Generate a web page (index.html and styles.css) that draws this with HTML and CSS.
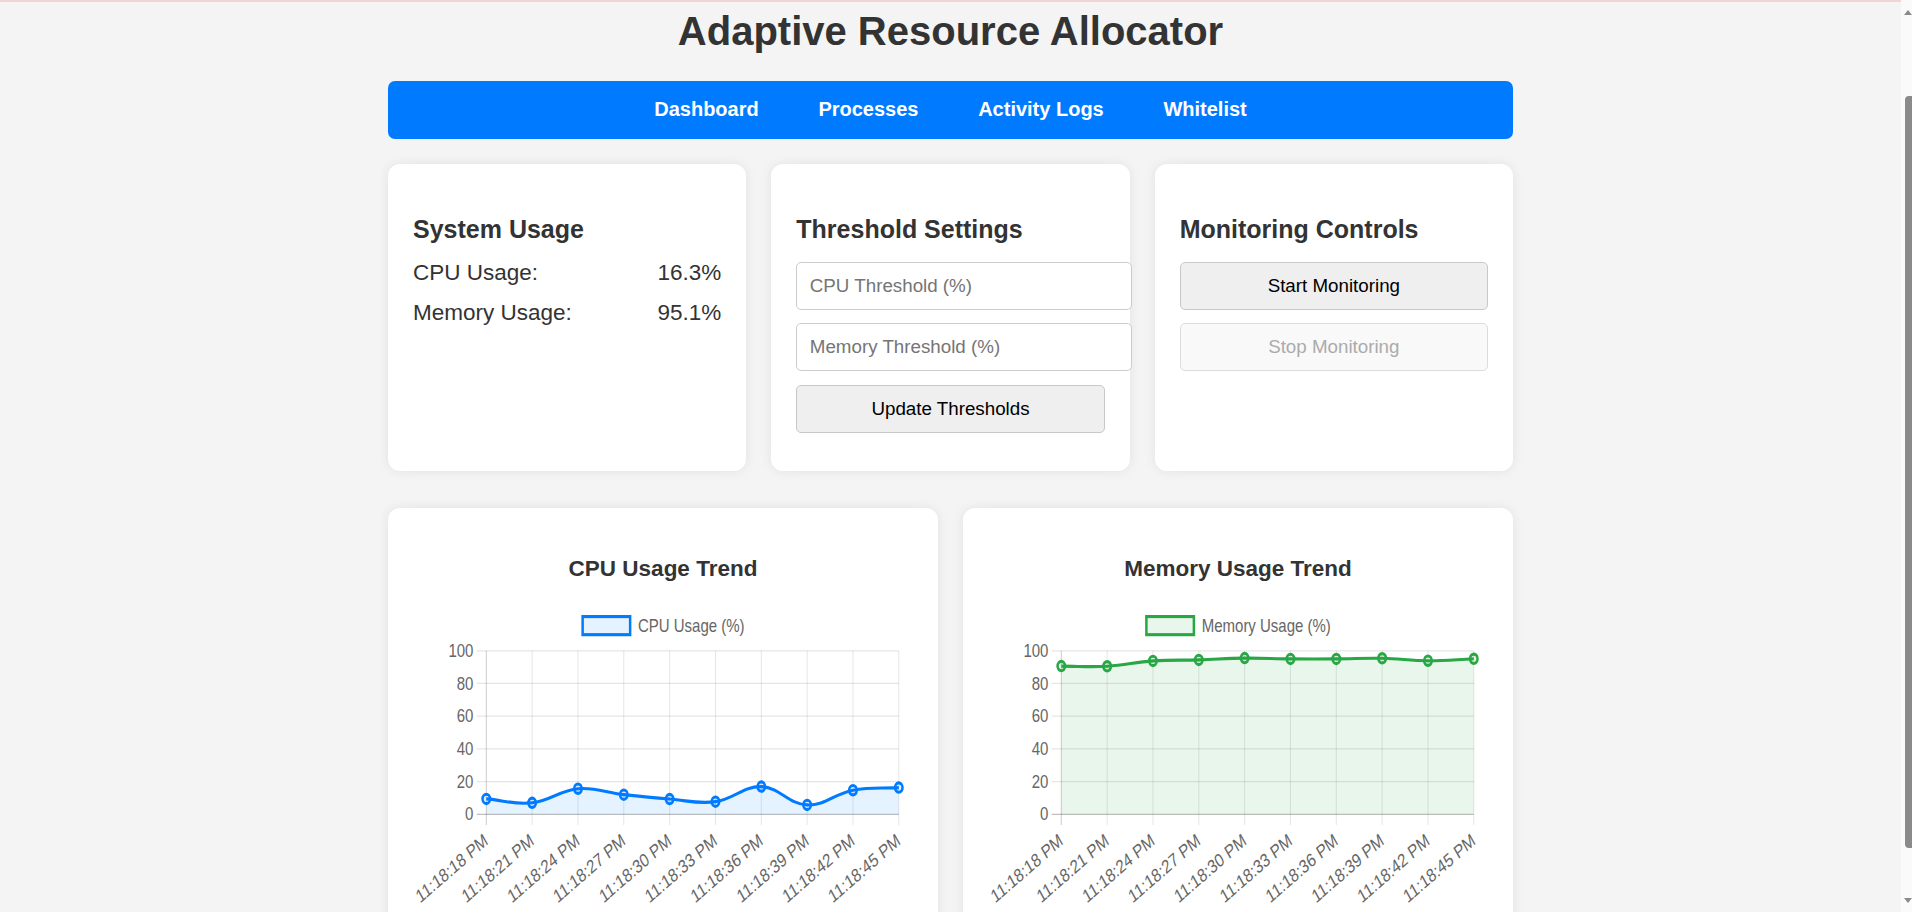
FILE: index.html
```html
<!DOCTYPE html>
<html lang="en">
<head>
<meta charset="UTF-8">
<title>Adaptive Resource Allocator</title>
<link rel="stylesheet" href="styles.css">
</head>
<body>
<div class="container">
  <h1 class="title">Adaptive Resource Allocator</h1>
  <nav class="nav">
    <a href="#">Dashboard</a>
    <a href="#">Processes</a>
    <a href="#">Activity Logs</a>
    <a href="#">Whitelist</a>
  </nav>

  <section class="panels">
    <div class="card">
      <h2 class="card-title">System Usage</h2>
      <div class="stats">
        <div class="stat"><span>CPU Usage:</span><span>16.3%</span></div>
        <div class="stat"><span>Memory Usage:</span><span>95.1%</span></div>
      </div>
    </div>
    <div class="card">
      <h2 class="card-title">Threshold Settings</h2>
      <div class="controls">
        <input class="field" type="number" placeholder="CPU Threshold (%)">
        <input class="field" type="number" placeholder="Memory Threshold (%)">
        <button class="btn" type="button">Update Thresholds</button>
      </div>
    </div>
    <div class="card">
      <h2 class="card-title">Monitoring Controls</h2>
      <div class="controls">
        <button class="btn" type="button">Start Monitoring</button>
        <button class="btn" type="button" disabled>Stop Monitoring</button>
      </div>
    </div>
  </section>

  <section class="charts">
    <div class="card chart-card">
      <h3 class="chart-title">CPU Usage Trend</h3>
      <svg class="chart" id="cpuChart" viewBox="0 0 500 250" preserveAspectRatio="none"></svg>
    </div>
    <div class="card chart-card">
      <h3 class="chart-title">Memory Usage Trend</h3>
      <svg class="chart" id="memChart" viewBox="0 0 500 250" preserveAspectRatio="none"></svg>
    </div>
  </section>
</div>

<div class="scrollbar" aria-hidden="true">
  <span class="sb-up"></span>
  <span class="sb-thumb"></span>
  <span class="sb-down"></span>
</div>
<script src="script.js"></script>
</body>
</html>
```

FILE: styles.css
```css
html {
  background: #f4f4f4;
  scrollbar-width: none;
}

body {
  margin: 0;
  padding-right: 11px;
  border-top: 2px solid #f4d4d2;
  background: #f4f4f4;
  color: #333;
  font-family: "Liberation Sans", Arial, sans-serif;
}

.container {
  width: 1125px;
  margin: 0 auto;
}

.title {
  margin: 6px 0 27px;
  font-size: 40px;
  line-height: 46px;
  font-weight: bold;
  text-align: center;
  color: #333;
}

.nav {
  box-sizing: border-box;
  height: 58px;
  padding-bottom: 2px;
  background: #007bff;
  border-radius: 7px;
  display: flex;
  justify-content: center;
  align-items: center;
  gap: 59.7px;
}

.nav a {
  color: #fff;
  text-decoration: none;
  font-weight: bold;
  font-size: 20px;
  line-height: 23px;
}

.panels {
  display: grid;
  grid-template-columns: repeat(3, 1fr);
  gap: 25px;
  margin-top: 25px;
}

.card {
  background: #fff;
  border-radius: 12px;
  padding: 25px;
  box-shadow: 0 0 12px rgba(0, 0, 0, 0.08);
}

.card-title {
  margin: 25.7px 0 0;
  font-size: 25px;
  line-height: 28.75px;
  font-weight: bold;
  color: #333;
}

.stats {
  margin-top: 17px;
}

.stat {
  display: flex;
  justify-content: space-between;
  font-size: 22.5px;
  line-height: 25.9px;
  margin-bottom: 13.6px;
}

.controls {
  display: flex;
  flex-direction: column;
  align-items: flex-start;
  gap: 13.5px;
  margin: 18.3px 0 13px;
}

.field {
  box-sizing: border-box;
  width: calc(100% + 27px);
  height: 48px;
  margin: 0;
  padding: 0 12.5px;
  border: 1px solid #ccc;
  border-radius: 5px;
  background: #fff;
  color: #333;
  font: 18.75px "Liberation Sans", Arial, sans-serif;
}

.field::placeholder {
  color: #757575;
}

.btn {
  box-sizing: border-box;
  width: 100%;
  height: 48px;
  margin: 0;
  border: 1px solid #c8c8c8;
  border-radius: 5px;
  background: #efefef;
  color: #000;
  font: 18.75px "Liberation Sans", Arial, sans-serif;
}

.btn:disabled {
  background: #f9f9f9;
  border-color: #dcdcdc;
  color: #ababab;
}

.charts {
  display: grid;
  grid-template-columns: 1fr 1fr;
  gap: 25px;
  margin-top: 37.5px;
}

.chart-title {
  margin: 22.5px 0;
  font-size: 22.5px;
  line-height: 25.9px;
  font-weight: bold;
  text-align: center;
  color: #333;
}

.chart {
  display: block;
  width: 500px;
  height: 312.5px;
}

/* window scrollbar drawn over the right edge */
.scrollbar {
  position: fixed;
  top: 0;
  right: 0;
  width: 11px;
  height: 100%;
  background: #fafafa;
}

.sb-thumb {
  position: absolute;
  top: 96px;
  left: 4px;
  width: 7px;
  height: 752px;
  background: #8a8a8a;
  border-radius: 4px 0 0 4px;
}

.sb-up,
.sb-down {
  position: absolute;
  left: 3px;
  width: 0;
  height: 0;
  border-left: 4px solid transparent;
  border-right: 4px solid transparent;
}

.sb-up {
  top: 10px;
  border-bottom: 5px solid #8a8a8a;
}

.sb-down {
  top: 898px;
  border-top: 5px solid #8a8a8a;
}
```

FILE: script.js
```js
(function () {
  var NS = 'http://www.w3.org/2000/svg';
  var labels = ['11:18:18 PM', '11:18:21 PM', '11:18:24 PM', '11:18:27 PM', '11:18:30 PM',
    '11:18:33 PM', '11:18:36 PM', '11:18:39 PM', '11:18:42 PM', '11:18:45 PM'];
  var charts = [
    { id: 'cpuChart', label: 'CPU Usage (%)', color: '#007bff', fill: 'rgba(0,123,255,0.1)',
      data: [9.4, 7.0, 15.6, 12.0, 9.3, 7.7, 16.9, 5.7, 14.7, 16.3] },
    { id: 'memChart', label: 'Memory Usage (%)', color: '#28a745', fill: 'rgba(40,167,69,0.1)',
      data: [90.6, 90.5, 93.8, 94.4, 95.5, 95.0, 95.0, 95.4, 93.9, 95.1] }
  ];
  var L = 73.3, R = 485.8, T = 37.4, B = 168.2;

  function el(tag, attrs, parent) {
    var e = document.createElementNS(NS, tag);
    for (var k in attrs) e.setAttribute(k, attrs[k]);
    parent.appendChild(e);
    return e;
  }
  function fontAttrs(extra) {
    var a = { 'font-family': 'Liberation Sans, Arial, sans-serif', 'font-size': 15, fill: '#666' };
    for (var k in extra) a[k] = extra[k];
    return a;
  }

  charts.forEach(function (c) {
    var svg = document.getElementById(c.id);
    var step = (R - L) / (labels.length - 1);

    for (var i = 0; i <= 5; i++) {
      var y = B - (B - T) * i / 5;
      el('line', { x1: 63.8, x2: R, y1: y, y2: y,
        stroke: i === 0 ? 'rgba(0,0,0,0.25)' : 'rgba(0,0,0,0.1)', 'stroke-width': 1 }, svg);
      var yt = el('text', fontAttrs({ x: 60.4, y: y, 'text-anchor': 'end', 'dominant-baseline': 'central' }), svg);
      yt.textContent = String(i * 20);
    }

    labels.forEach(function (lab, j) {
      var x = L + step * j;
      el('line', { x1: x, x2: x, y1: T, y2: B + 8.6,
        stroke: j === 0 ? 'rgba(0,0,0,0.2)' : 'rgba(0,0,0,0.1)', 'stroke-width': 1 }, svg);
      var xt = el('text', fontAttrs({ transform: 'translate(' + x + ' 187.5) rotate(-35)',
        'text-anchor': 'end', 'dominant-baseline': 'central' }), svg);
      xt.textContent = lab;
    });

    var pts = c.data.map(function (v, j) { return [L + step * j, B - (B - T) * v / 100]; });
    var cps = pts.map(function (p, i) {
      var p0 = pts[i - 1] || p, p2 = pts[i + 1] || p;
      var d01 = Math.hypot(p[0] - p0[0], p[1] - p0[1]);
      var d12 = Math.hypot(p2[0] - p[0], p2[1] - p[1]);
      var s01 = d01 / (d01 + d12) || 0, s12 = d12 / (d01 + d12) || 0;
      var fa = 0.4 * s01, fb = 0.4 * s12;
      return {
        prev: [p[0] - fa * (p2[0] - p0[0]), p[1] - fa * (p2[1] - p0[1])],
        next: [p[0] + fb * (p2[0] - p0[0]), p[1] + fb * (p2[1] - p0[1])]
      };
    });
    var d = 'M' + pts[0].join(',');
    for (var k = 1; k < pts.length; k++) {
      d += ' C' + cps[k - 1].next.join(',') + ' ' + cps[k].prev.join(',') + ' ' + pts[k].join(',');
    }
    el('path', { d: d + ' L' + pts[pts.length - 1][0] + ',' + B + ' L' + pts[0][0] + ',' + B + ' Z', fill: c.fill }, svg);
    el('path', { d: d, fill: 'none', stroke: c.color, 'stroke-width': 2.5 }, svg);
    pts.forEach(function (p) {
      el('circle', { cx: p[0], cy: p[1], r: 3.75, fill: c.fill, stroke: c.color, 'stroke-width': 2.5 }, svg);
    });

    var lt = el('text', fontAttrs({ y: 17.3, 'dominant-baseline': 'central' }), svg);
    lt.textContent = c.label;
    var tw = lt.getComputedTextLength();
    var start = 250 - (50 + 6.6 + tw) / 2;
    el('rect', { x: start + 1.25, y: 10.05, width: 47.5, height: 14.5, fill: c.fill, stroke: c.color, 'stroke-width': 2.5 }, svg);
    lt.setAttribute('x', start + 56.6);
  });
})();
```
